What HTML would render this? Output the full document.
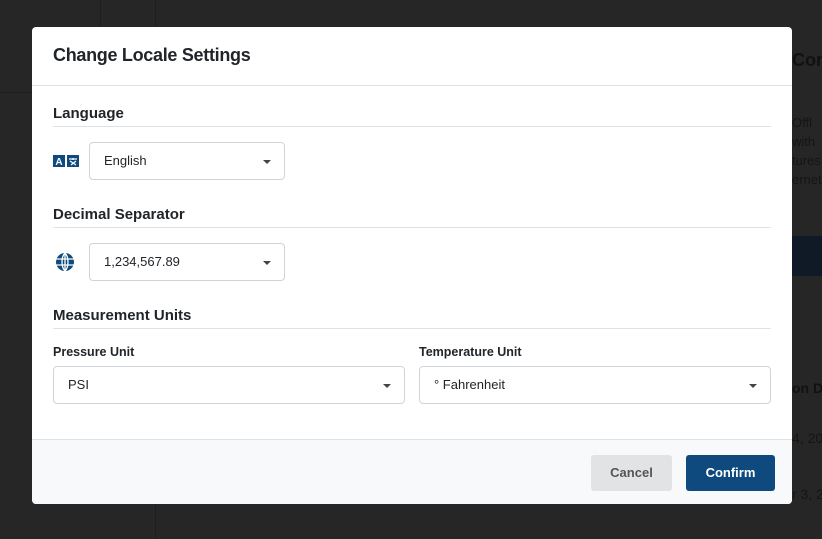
<!DOCTYPE html>
<html><head><style>
*{box-sizing:border-box;margin:0;padding:0}
body{width:822px;height:539px;overflow:hidden;background:#262626;font-family:"Liberation Sans","DejaVu Sans",sans-serif;position:relative}
.bg{position:absolute;color:#1a1a1a;white-space:nowrap}
.modal{position:absolute;left:32px;top:27px;width:760px;height:477px;background:#fff;border-radius:4px;overflow:hidden}
.hdr{height:59px;border-bottom:1px solid #dee2e6;padding:18px 21px}
.hdr h1{font-size:18px;font-weight:bold;color:#212529;letter-spacing:-0.3px}
.sec{position:absolute;left:21px;right:21px;font-size:15px;font-weight:bold;color:#212529;border-bottom:1px solid #dee2e6;padding-bottom:4px}
.sel{position:absolute;height:38px;border:1px solid #ced4da;border-radius:4px;font-size:13px;color:#212529;padding:10px 14px;background:#fff}
.sel:after{content:"";position:absolute;right:13px;top:17px;border-left:4px solid transparent;border-right:4px solid transparent;border-top:4px solid #444}
.lbl{position:absolute;font-size:12.5px;font-weight:bold;color:#212529}
.ftr{position:absolute;left:0;right:0;top:412px;bottom:0;background:#f8f9fa;border-top:1px solid #dee2e6}
.btn{position:absolute;top:15px;height:36px;border-radius:3px;font-size:13px;font-weight:bold;text-align:center;line-height:36px}
</style></head><body>
<div class="bg" style="left:155px;top:0;width:1px;height:539px;background:#1e1e1e"></div>
<div class="bg" style="left:100px;top:0;width:1px;height:90px;background:#1e1e1e"></div>
<div class="bg" style="left:0;top:92px;width:155px;height:1px;background:#1e1e1e"></div>
<div class="bg" style="left:792px;top:50px;color:#111;font-size:18px;font-weight:bold">Cont</div>
<div class="bg" style="left:792px;top:113px;color:#151515;font-size:13px;line-height:19px">Offl<br>with<br>tures<br>ernet</div>
<div class="bg" style="left:792px;top:236px;width:30px;height:40px;background:#0f1a26"></div>
<div class="bg" style="left:792px;top:380px;color:#111;font-size:14px;font-weight:bold">on D</div>
<div class="bg" style="left:792px;top:430px;color:#151515;font-size:14px">4, 20</div>
<div class="bg" style="left:792px;top:486px;color:#151515;font-size:14px">r 3, 2</div>
<div class="modal">
 <div class="hdr"><h1>Change Locale Settings</h1></div>
 <div class="sec" style="top:78px">Language</div>
 <svg style="position:absolute;left:21px;top:127px" width="27" height="14" viewBox="0 0 27 14"><rect width="12" height="12" y="1" fill="#0e4a7e"/><rect x="14" y="1" width="12" height="12" fill="#0e4a7e"/><text x="6" y="11" font-size="10" font-weight="bold" fill="#fff" text-anchor="middle" font-family="Liberation Sans">A</text><path d="M16 5h8M20 4v2M17 7l6 4M23 7l-5 4" stroke="#fff" stroke-width="1.2"/></svg>
 <div class="sel" style="left:57px;top:115px;width:196px">English</div>
 <div class="sec" style="top:179px">Decimal Separator</div>
 <svg style="position:absolute;left:23px;top:225px" width="20" height="20" viewBox="0 0 20 20"><circle cx="10" cy="10" r="9" fill="#0e4a7e"/><path d="M1 7h18M1 13h18M10 1v18M10 1c-4 4-4 14 0 18M10 1c4 4 4 14 0 18" stroke="#fff" stroke-width="1.3" fill="none"/></svg>
 <div class="sel" style="left:57px;top:216px;width:196px">1,234,567.89</div>
 <div class="sec" style="top:280px">Measurement Units</div>
 <div class="lbl" style="left:21px;top:318px">Pressure Unit</div>
 <div class="sel" style="left:21px;top:339px;width:352px">PSI</div>
 <div class="lbl" style="left:387px;top:318px">Temperature Unit</div>
 <div class="sel" style="left:387px;top:339px;width:352px">° Fahrenheit</div>
 <div class="ftr">
  <div class="btn" style="left:559px;width:81px;background:#e2e3e5;color:#555">Cancel</div>
 <div class="btn" style="left:654px;width:89px;background:#0e4a7e;color:#fff">Confirm</div>
 </div>
</div>
</body></html>
